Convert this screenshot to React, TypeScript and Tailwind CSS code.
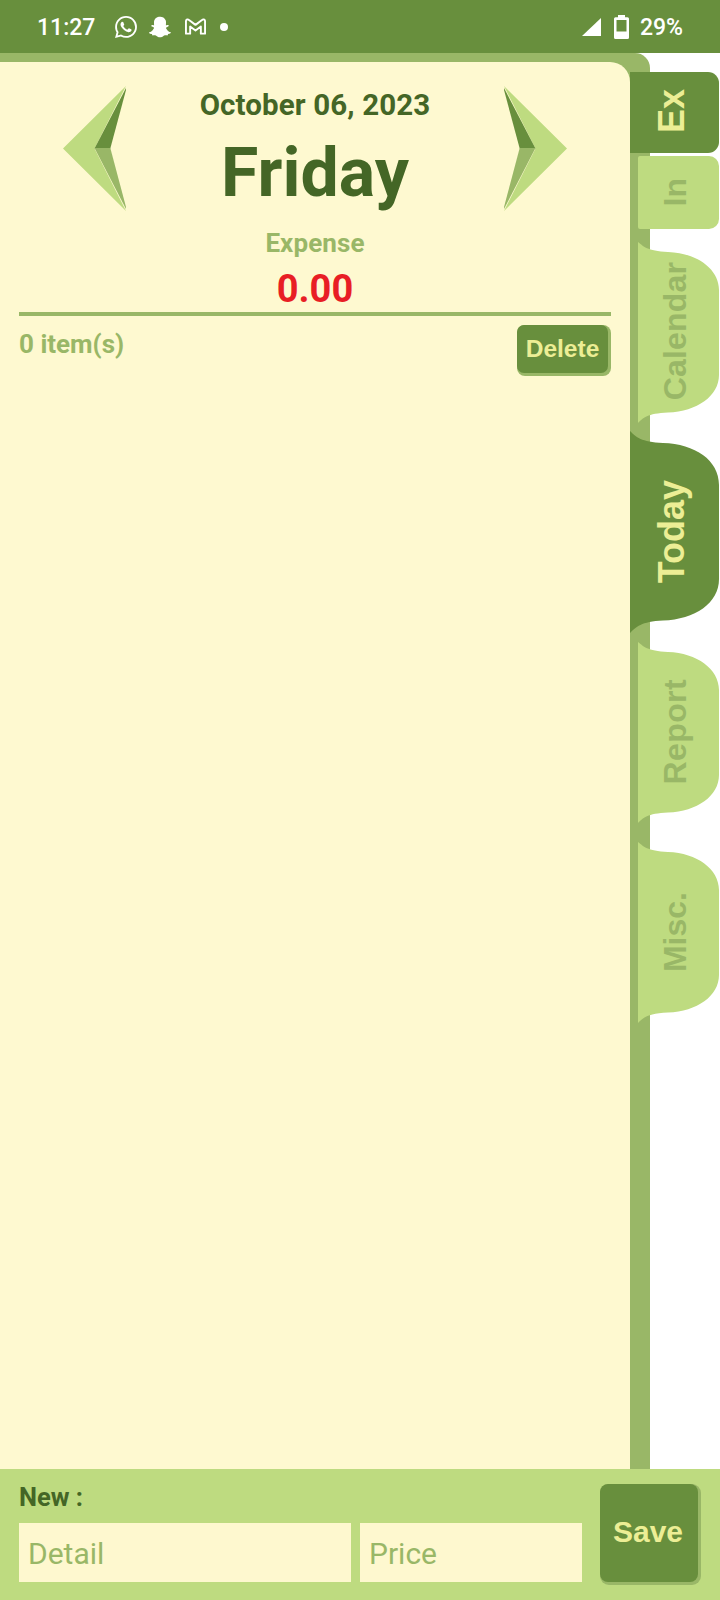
import { FaSnapchatGhost } from "react-icons/fa";

function StatusBar() {
  return (
    <header className="flex h-[53px] shrink-0 items-center bg-[#688f3d] pl-[37px] pr-[37px] text-[23px] font-medium text-white">
      <span className="w-[78px] pt-[4px]">11:27</span>
      <svg width="22" height="24" viewBox="0 0 24 24" fill="white" className="mr-[12px]">
        <path d="M17.472 14.382c-.297-.149-1.758-.867-2.03-.967-.273-.099-.471-.148-.67.15-.197.297-.767.966-.94 1.164-.173.199-.347.223-.644.075-.297-.15-1.255-.463-2.39-1.475-.883-.788-1.48-1.761-1.653-2.059-.173-.297-.018-.458.13-.606.134-.133.298-.347.446-.52.149-.174.198-.298.298-.497.099-.198.05-.371-.025-.52-.075-.149-.669-1.612-.916-2.207-.242-.579-.487-.5-.669-.51-.173-.008-.371-.01-.57-.01-.198 0-.52.074-.792.372-.272.297-1.04 1.016-1.04 2.479 0 1.462 1.065 2.875 1.213 3.074.149.198 2.096 3.2 5.077 4.487.709.306 1.262.489 1.694.625.712.227 1.36.195 1.871.118.571-.085 1.758-.719 2.006-1.413.248-.694.248-1.289.173-1.413-.074-.124-.272-.198-.57-.347m-5.421 7.403h-.004a9.87 9.87 0 01-5.031-1.378l-.361-.214-3.741.982.998-3.648-.235-.374a9.86 9.86 0 01-1.51-5.26c.001-5.45 4.436-9.884 9.888-9.884 2.64 0 5.122 1.03 6.988 2.898a9.825 9.825 0 012.893 6.994c-.003 5.45-4.437 9.884-9.885 9.884m8.413-18.297A11.815 11.815 0 0012.05 0C5.495 0 .16 5.335.157 11.892c0 2.096.547 4.142 1.588 5.945L.057 24l6.305-1.654a11.882 11.882 0 005.683 1.448h.005c6.554 0 11.89-5.335 11.893-11.893a11.821 11.821 0 00-3.48-8.413z" />
      </svg>
      <FaSnapchatGhost size={22} className="mr-[14px]" />
      <svg width="21" height="17" viewBox="0 0 22 17" fill="none" stroke="white" strokeWidth="2" strokeLinejoin="round">
        <path d="M1 2.8C1 1 3 .6 4.200 1.600L11 6.800l6.800-5.200C19 .6 21 1 21 2.800V16h-4.400V8.500L11 12.700 5.400 8.500V16H1z" />
      </svg>
      <span className="ml-[14px] size-2 rounded-full bg-white" />
      <svg className="ml-auto mr-[13px]" width="19" height="18" viewBox="0 0 19 18" fill="white">
        <path d="M19 0v18H0z" />
      </svg>
      <svg className="mr-[11px]" width="15" height="24" viewBox="0 0 15 24" fill="white">
        <path fillRule="evenodd" d="M4 0h7v2.200h2.500Q15 2.200 15 3.700v18.800q0 1.500-1.500 1.500h-12Q0 24 0 22.500V3.700q0-1.500 1.500-1.500H4zM2.500 5v11.600h10V5z" />
      </svg>
      <span className="pt-[4px]">29%</span>
    </header>
  );
}

function Arrow({ flip = false }: { flip?: boolean }) {
  return (
    <svg width="63" height="125" viewBox="0 0 63 125" className={flip ? "-scale-x-100" : ""}>
      <path d="M63 0 0 62.500 63 125 31.500 62.500z" fill="#bedb80" />
      <path d="M63 2 31.500 62.500H47.300L63 4z" fill="#688f3d" />
      <path d="M63 123 31.500 62H47.300L63 121z" fill="#99b767" />
    </svg>
  );
}

const inactive = "ml-[8px] w-[81px] text-[32px] text-[#99b767]";
const active = "w-[89px] text-[36px] text-[#ecee95]";

function VerticalLabel({ text, className }: { text: string; className: string }) {
  return <span className={`relative rotate-180 whitespace-nowrap leading-none [writing-mode:vertical-rl] ${className}`}>{text}</span>;
}

function CurvedTab({ text, className, labelClass }: { text: string; className: string; labelClass: string }) {
  return (
    <button className={`relative flex h-[181px] shrink-0 items-center justify-center font-bold ${inactive} ${className}`}>
      <svg className="absolute inset-0" width="81" height="181" viewBox="0 0 81 181" fill="#bedb80">
        <path d="M0 0C5 4 9 9 30 10C59 11 81 27 81 48V133C81 154 59 169.500 30 170.500C9 171.500 5 176 0 181z" />
      </svg>
      <VerticalLabel text={text} className={labelClass} />
    </button>
  );
}

function SideTabs() {
  return (
    <nav className="relative -ml-[20px] flex w-[90px] shrink-0 flex-col items-start pt-[19px] font-['Liberation_Sans',Arial,sans-serif]">
      <button className={`flex h-[80.500px] items-center justify-center rounded-r-[11px] bg-[#688f3d] font-bold ${active}`}>
        <VerticalLabel text="Ex" className="-translate-x-[3.500px] -translate-y-px" />
      </button>
      <button className={`mt-[3px] flex h-[73px] items-center justify-center rounded-l-[2px] rounded-r-[10px] bg-[#bedb80] font-bold ${inactive}`}>
        <VerticalLabel text="In" className="-translate-x-[4px]" />
      </button>
      <CurvedTab text="Calendar" className="mt-[13.500px]" labelClass="-translate-x-[4px] -translate-y-px tracking-[0.150px]" />
      <button className={`relative mt-[8px] flex h-[202px] shrink-0 items-center justify-center font-bold ${active}`}>
        <svg className="absolute inset-0" width="89" height="202" viewBox="0 0 89 202" fill="#688f3d">
          <path d="M0 0C6 6 11 11 33 12C65 13 89 29 89 54V148C89 172 65 188.500 33 189.500C11 190.500 6 196 0 202z" />
        </svg>
        <VerticalLabel text="Today" className="-translate-x-[3.500px]" />
      </button>
      <CurvedTab text="Report" className="mt-[9px]" labelClass="-translate-x-[4px] -translate-y-[1px] tracking-[0.400px]" />
      <CurvedTab text="Misc." className="mt-[19px]" labelClass="-translate-x-[4px]" />
    </nav>
  );
}

function DayPanel() {
  return (
    <div className="w-[650px] rounded-tr-[15px] bg-[#99b767] pr-[20px] pt-[9px]">
      <main className="h-full rounded-tr-[20px] bg-[#fef9d0] px-[19px] pt-[24px]">
        <div className="flex h-[230px] justify-between border-b-4 border-[#99b767] pl-[44px] pr-[44px]">
          <button className="h-[125px]"><Arrow /></button>
          <div className="flex flex-col items-center text-center font-bold">
            <div className="mt-[1px] text-[29.500px] leading-[36px] tracking-[0.120px] text-[#446626]">October 06, 2023</div>
            <h1 className="mt-[10px] text-[68px] leading-[80px] text-[#446626]">Friday</h1>
            <div className="mt-[15px] text-[26px] leading-[30px] tracking-[0.100px] text-[#99b767]">Expense</div>
            <div className="mt-[9px] text-[38px] leading-[44px] text-[#e81e25]">0.00</div>
          </div>
          <button className="h-[125px]"><Arrow flip /></button>
        </div>
        <div className="flex items-start justify-between pt-[9px]">
          <span className="mt-[4px] text-[26px] font-bold leading-[30px] text-[#99b767]">0 item(s)</span>
          <button className="rounded-[8px] bg-[#99b767] pb-[3px] pr-[3px]">
            <span className="flex h-[48px] w-[91px] items-center justify-center rounded-[7px] bg-[#688f3d] font-['Liberation_Sans',Arial,sans-serif] text-[24.500px] font-bold text-[#ecee95]">Delete</span>
          </button>
        </div>
      </main>
    </div>
  );
}

function EntryBar() {
  return (
    <footer className="flex h-[131px] shrink-0 items-start bg-[#bedb80] pl-[19px] pt-[15px]">
      <div className="w-[563px]">
        <div className="-mt-[2px] text-[25.500px] font-bold leading-[30px] text-[#446626]">New :</div>
        <div className="mt-[11px] flex gap-[9px]">
          <input placeholder="Detail" className="h-[59px] w-[332px] bg-[#fef8cf] px-[9px] pt-px text-[30px] placeholder:text-[#99b767] placeholder:opacity-100" />
          <input placeholder="Price" className="h-[59px] w-[222px] bg-[#fef8cf] px-[9px] pt-px text-[30px] placeholder:text-[#99b767] placeholder:opacity-100" />
        </div>
      </div>
      <button className="ml-[18px] rounded-[9px] bg-[#99b767] pb-[3px] pr-[3px]">
        <span className="flex h-[98px] w-[98px] items-center justify-center rounded-[8px] bg-[#688f3d] pb-[3px] pr-[2px] font-['Liberation_Sans',Arial,sans-serif] text-[30px] font-bold text-[#ecee95]">Save</span>
      </button>
    </footer>
  );
}

export default function App() {
  return (
    <div className="flex h-[1600px] w-[720px] flex-col overflow-hidden bg-white font-[Roboto,sans-serif]">
      <StatusBar />
      <div className="flex min-h-0 flex-1">
        <DayPanel />
        <SideTabs />
      </div>
      <EntryBar />
    </div>
  );
}
